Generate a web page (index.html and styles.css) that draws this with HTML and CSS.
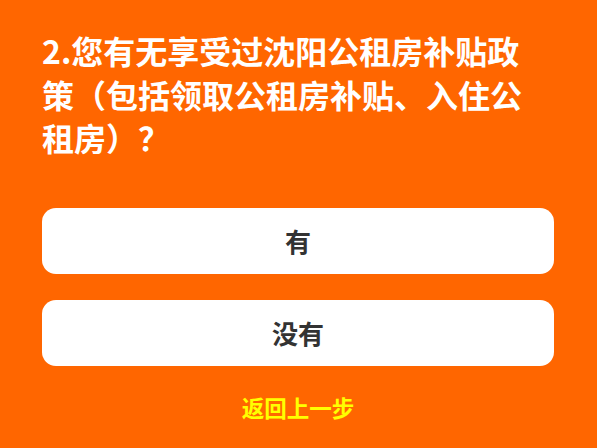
FILE: index.html
```html
<!DOCTYPE html>
<html lang="zh-CN">
<head>
<meta charset="utf-8">
<title>问卷</title>
<link rel="stylesheet" href="styles.css">
</head>
<body>
<main class="page">
  <h2 class="question">2.您有无享受过沈阳公租房补贴政策（包括领取公租房补贴、入住公租房）？</h2>
  <div class="options">
    <button class="option" type="button">有</button>
    <button class="option" type="button">没有</button>
  </div>
  <a class="back" href="#">返回上一步</a>
</main>
</body>
</html>
```
FILE: styles.css
```css
html, body {
  margin: 0;
  padding: 0;
  background: #ff6600;
  height: 100%;
}
body {
  font-family: "Noto Sans CJK SC", "Noto Sans", sans-serif;
}
.page {
  padding: 29px 43px 0 42px;
  display: flex;
  flex-direction: column;
}
.question {
  margin: 0;
  max-width: 500px;
  color: #ffffff;
  font-size: 32px;
  font-weight: bold;
  line-height: 43.5px;
}
.options {
  margin-top: 48px;
  display: flex;
  flex-direction: column;
  gap: 26px;
}
.option {
  height: 66px;
  border: none;
  border-radius: 14px;
  background: #ffffff;
  color: #333333;
  font-family: inherit;
  font-size: 26px;
  font-weight: bold;
  padding: 0;
}
.back {
  margin-top: 26px;
  align-self: center;
  color: #ffff00;
  font-size: 22.5px;
  font-weight: bold;
  line-height: 30px;
  text-decoration: none;
}
```
